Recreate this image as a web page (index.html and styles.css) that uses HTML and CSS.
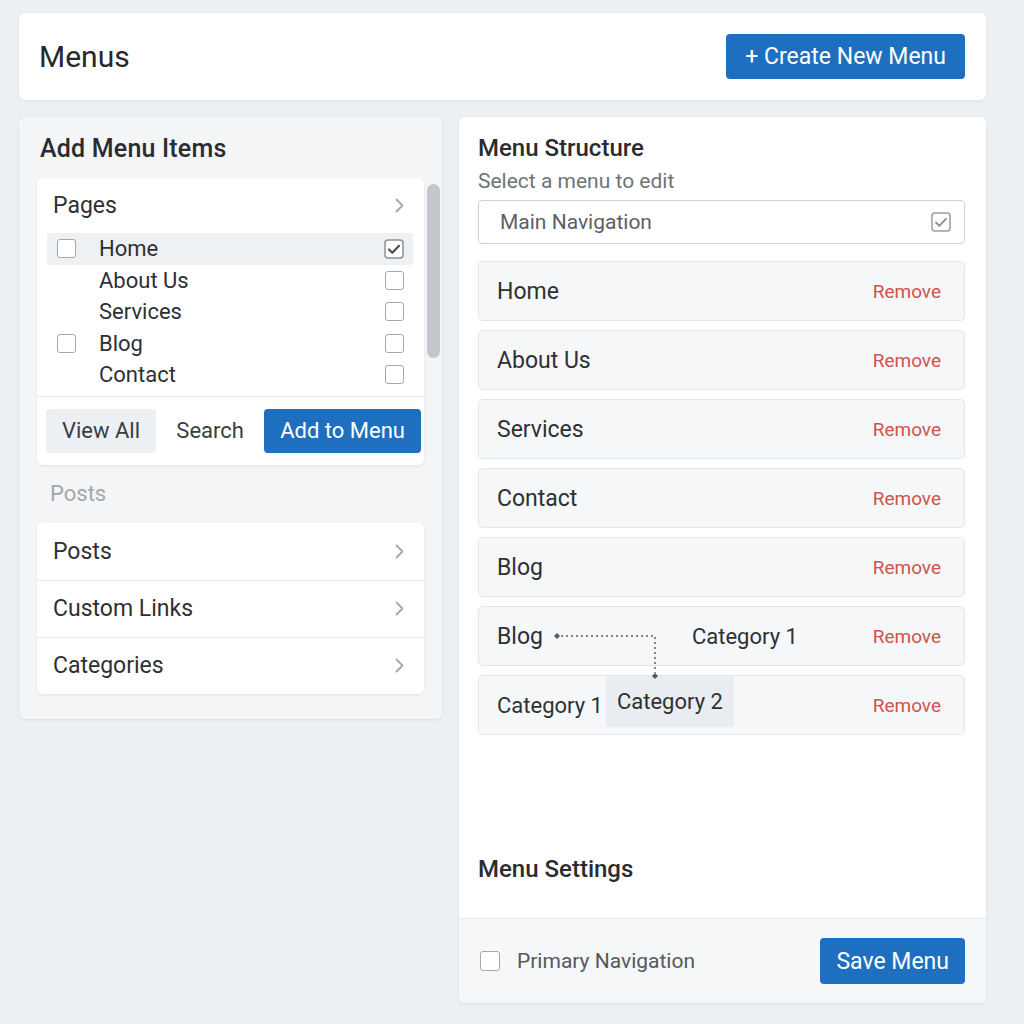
FILE: index.html
```html
<!DOCTYPE html>
<html lang="en">
<head>
    <meta charset="UTF-8">
    <meta name="viewport" content="width=device-width, initial-scale=1.0">
    <title>Menus</title>
    <link rel="stylesheet" href="styles.css">
</head>
<body>

    <header class="topbar">
        <h1>Menus</h1>
        <button class="btn btn-primary btn-lg">+ Create New Menu</button>
    </header>

    <div class="columns">
        <section class="panel add-panel">
            <h2>Add Menu Items</h2>

            <div class="box pages-box">
                <div class="box-head">
                    <span>Pages</span>
                    <svg class="chevron" width="9" height="15" viewBox="0 0 9 15"><path d="M1.5 1.5l6 6-6 6" fill="none" stroke="#a3a7ab" stroke-width="1.8" stroke-linecap="round" stroke-linejoin="round"/></svg>
                </div>
                <ul class="page-list">
                    <li class="active">
                        <span class="cb"></span>
                        <span class="name">Home</span>
                        <svg class="cb-icon" width="20" height="20" viewBox="0 0 20 20"><rect x="1" y="1" width="18" height="18" rx="3" fill="#fff" stroke="#8d9195" stroke-width="1.5"/><path d="M5 10.5l3.3 3.3L15 6.8" fill="none" stroke="#4a4d51" stroke-width="2.2" stroke-linecap="round" stroke-linejoin="round"/></svg>
                    </li>
                    <li>
                        <span class="cb hidden"></span>
                        <span class="name">About Us</span>
                        <span class="cb"></span>
                    </li>
                    <li>
                        <span class="cb hidden"></span>
                        <span class="name">Services</span>
                        <span class="cb"></span>
                    </li>
                    <li>
                        <span class="cb"></span>
                        <span class="name">Blog</span>
                        <span class="cb"></span>
                    </li>
                    <li>
                        <span class="cb hidden"></span>
                        <span class="name">Contact</span>
                        <span class="cb"></span>
                    </li>
                </ul>
                <div class="box-actions">
                    <button class="btn btn-light">View All</button>
                    <button class="btn btn-plain">Search</button>
                    <button class="btn btn-primary">Add to Menu</button>
                </div>
            </div>

            <div class="scrollbar"></div>

            <div class="section-label">Posts</div>

            <div class="box">
                <div class="box-row">
                    <span>Posts</span>
                    <svg class="chevron" width="9" height="15" viewBox="0 0 9 15"><path d="M1.5 1.5l6 6-6 6" fill="none" stroke="#a3a7ab" stroke-width="1.8" stroke-linecap="round" stroke-linejoin="round"/></svg>
                </div>
                <div class="box-row">
                    <span>Custom Links</span>
                    <svg class="chevron" width="9" height="15" viewBox="0 0 9 15"><path d="M1.5 1.5l6 6-6 6" fill="none" stroke="#a3a7ab" stroke-width="1.8" stroke-linecap="round" stroke-linejoin="round"/></svg>
                </div>
                <div class="box-row">
                    <span>Categories</span>
                    <svg class="chevron" width="9" height="15" viewBox="0 0 9 15"><path d="M1.5 1.5l6 6-6 6" fill="none" stroke="#a3a7ab" stroke-width="1.8" stroke-linecap="round" stroke-linejoin="round"/></svg>
                </div>
            </div>
        </section>

        <section class="panel structure">
            <div class="structure-body">
                <h2>Menu Structure</h2>
                <div class="hint">Select a menu to edit</div>
                <div class="select">
                    <span>Main Navigation</span>
                    <svg width="20" height="20" viewBox="0 0 20 20"><rect x="1" y="1" width="18" height="18" rx="3" fill="none" stroke="#9a9ea2" stroke-width="1.5"/><path d="M5 10.5l3.3 3.3L15 6.8" fill="none" stroke="#8a8e92" stroke-width="1.8" stroke-linecap="round" stroke-linejoin="round"/></svg>
                </div>

                <div class="items">
                    <div class="item"><span>Home</span><a class="remove">Remove</a></div>
                    <div class="item"><span>About Us</span><a class="remove">Remove</a></div>
                    <div class="item"><span>Services</span><a class="remove">Remove</a></div>
                    <div class="item"><span>Contact</span><a class="remove">Remove</a></div>
                    <div class="item"><span>Blog</span><a class="remove">Remove</a></div>
                    <div class="item">
                        <span>Blog</span>
                        <svg class="connector" width="149" height="20" viewBox="0 0 149 20">
                            <path d="M14 7l3 3-3 3-3-3z" fill="#555a5f"/>
                            <path d="M18 10H112V47" fill="none" stroke="#5b6065" stroke-width="1.5" stroke-dasharray="2 3"/>
                            <path d="M112 47l3 3-3 3-3-3z" fill="#555a5f"/>
                        </svg>
                        <span class="sub">Category 1</span>
                        <a class="remove">Remove</a>
                    </div>
                    <div class="item">
                        <span class="sub">Category 1</span>
                        <span class="chip">Category 2</span>
                        <a class="remove">Remove</a>
                    </div>
                </div>

                <h2 class="settings-title">Menu Settings</h2>
            </div>

            <div class="structure-foot">
                <label class="check-label"><span class="cb big"></span>Primary Navigation</label>
                <button class="btn btn-primary btn-save">Save Menu</button>
            </div>
        </section>
    </div>

</body>
</html>
```

FILE: styles.css
```css
body {
    margin: 0;
    padding: 13px 38px 21px 19px;
    background-color: #edf0f3;
    font-family: Roboto, "Liberation Sans", Arial, sans-serif;
    color: #2e3033;
}
h1, h2 {
    margin: 0;
    font-weight: 500;
}
ul {
    margin: 0;
    padding: 0;
    list-style: none;
}
.topbar {
    height: 87px;
    display: flex;
    align-items: center;
    justify-content: space-between;
    padding: 0 21px 0 20px;
    background-color: #fff;
    border-radius: 6px;
    box-shadow: 0 1px 3px rgba(0, 0, 0, 0.07);
}
.topbar h1 {
    font-size: 30px;
    font-weight: 400;
    color: #26282b;
}
.btn {
    font-family: inherit;
    border: none;
    border-radius: 4px;
    height: 44px;
    padding: 0 16px;
    font-size: 22px;
    white-space: nowrap;
    flex-shrink: 0;
    cursor: pointer;
}
.btn-primary {
    background-color: #1f6fc0;
    color: #fff;
}
.btn-lg {
    height: 45px;
    padding: 0 19px;
    font-size: 23px;
}
.btn-light {
    background-color: #edf0f3;
    color: #3a3d40;
}
.btn-plain {
    background: none;
    padding: 0 8px;
    color: #3a3d40;
}
.columns {
    display: flex;
    align-items: flex-start;
    gap: 17px;
    margin-top: 17px;
}
.panel {
    border-radius: 6px;
    box-shadow: 0 1px 3px rgba(0, 0, 0, 0.08);
}
.panel h2 {
    font-size: 24px;
    line-height: 30px;
    color: #2a2c2f;
}
.add-panel {
    position: relative;
    width: 423px;
    box-sizing: border-box;
    padding: 17px 18px 25px 18px;
    background-color: #f3f5f7;
}
.add-panel h2 {
    margin: 0 0 14px 3px;
    font-size: 25px;
    letter-spacing: 0.2px;
}
.box {
    background-color: #fff;
    border-radius: 6px;
    box-shadow: 0 1px 3px rgba(0, 0, 0, 0.08);
}
.box-head {
    height: 55px;
    display: flex;
    align-items: center;
    justify-content: space-between;
    padding: 0 20px 0 16px;
    font-size: 23px;
}
.page-list {
    padding: 0 11px 0 10px;
    margin-bottom: 5px;
}
.page-list li {
    height: 31.5px;
    display: flex;
    align-items: center;
    padding: 0 9px 0 10px;
    border-radius: 3px;
    font-size: 22px;
}
.page-list li.active {
    background-color: #eef1f4;
}
.page-list .name {
    margin-left: 23px;
    flex: 1;
}
.cb {
    width: 17px;
    height: 17px;
    border: 1.5px solid #a4a8ac;
    border-radius: 3px;
    background-color: #fff;
    flex-shrink: 0;
}
.cb.hidden {
    visibility: hidden;
}
.cb.big {
    width: 18px;
    height: 18px;
}
.box-actions {
    display: flex;
    justify-content: space-between;
    padding: 12px 3px 12px 9px;
    border-top: 1px solid #e6e9ec;
}
.scrollbar {
    position: absolute;
    top: 67px;
    right: 2px;
    width: 13px;
    height: 174px;
    border-radius: 7px;
    background-color: #c3c6ca;
}
.section-label {
    margin: 15px 0 15px 13px;
    line-height: 28px;
    font-size: 22px;
    color: #a3a7ab;
}
.box-row {
    height: 57px;
    display: flex;
    align-items: center;
    justify-content: space-between;
    padding: 0 20px 0 16px;
    font-size: 23px;
}
.box-row + .box-row {
    height: 56px;
    border-top: 1px solid #e8ebee;
}
.structure {
    flex: 1;
    background-color: #fff;
    overflow: hidden;
}
.structure-body {
    padding: 16px 21px 34px 19px;
}
.hint {
    margin-top: 6px;
    line-height: 24px;
    font-size: 21px;
    color: #6f7377;
}
.select {
    height: 44px;
    box-sizing: border-box;
    margin-top: 7px;
    display: flex;
    align-items: center;
    justify-content: space-between;
    padding: 0 13px 0 21px;
    border: 1.5px solid #cdd1d5;
    border-radius: 4px;
    font-size: 21px;
    color: #5c6064;
}
.items {
    margin-top: 17px;
    display: flex;
    flex-direction: column;
    gap: 9px;
}
.item {
    height: 60px;
    box-sizing: border-box;
    display: flex;
    align-items: center;
    padding: 0 23px 0 18px;
    background-color: #f5f7f9;
    border: 1px solid #e3e6e9;
    border-radius: 5px;
    font-size: 23px;
    color: #2e3033;
}
.item .sub {
    font-size: 22px;
}
.remove {
    margin-left: auto;
    font-size: 19px;
    color: #d2524c;
}
.connector {
    position: relative;
    z-index: 2;
    overflow: visible;
    flex-shrink: 0;
}
.chip {
    align-self: flex-start;
    height: 51px;
    display: flex;
    align-items: center;
    margin-left: 3px;
    padding: 0 11px;
    background-color: #e9edf1;
    border-radius: 4px;
    font-size: 22px;
}
.settings-title {
    margin-top: 119px;
}
.structure-foot {
    height: 85px;
    box-sizing: border-box;
    display: flex;
    align-items: center;
    justify-content: space-between;
    padding: 0 21px;
    background-color: #f6f7f9;
    border-top: 1px solid #e7e9ec;
}
.check-label {
    display: flex;
    align-items: center;
    gap: 17px;
    font-size: 21px;
    color: #55595d;
}
.btn-save {
    height: 46px;
    padding: 0 16px;
    font-size: 23px;
}
```
